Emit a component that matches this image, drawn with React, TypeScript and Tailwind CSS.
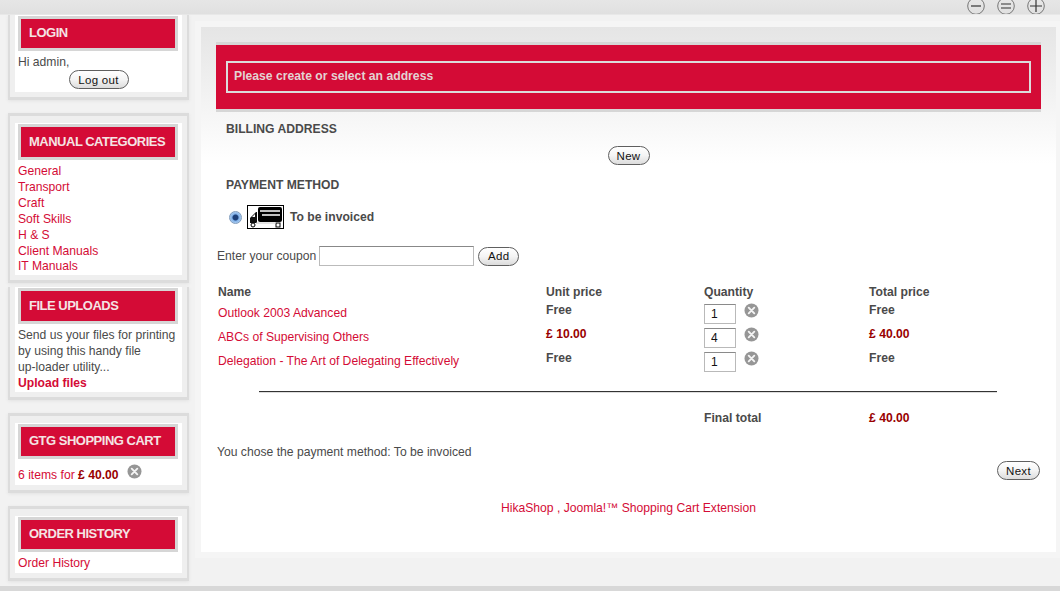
const font = { fontFamily: '"Liberation Sans", Arial, sans-serif' };

const categories = ["General", "Transport", "Craft", "Soft Skills", "H & S", "Client Manuals", "IT Manuals"];

const rows = [
  { name: "Outlook 2003 Advanced", unit: "Free", qty: "1", total: "Free" },
  { name: "ABCs of Supervising Others", unit: "£ 10.00", qty: "4", total: "£ 40.00" },
  { name: "Delegation - The Art of Delegating Effectively", unit: "Free", qty: "1", total: "Free" },
];

function RemoveIcon() {
  return (
    <svg width="15" height="15" viewBox="0 0 15 15" className="block shrink-0">
      <circle cx="7.5" cy="7.5" r="7" fill="#969696" />
      <path d="M4.7 4.7l5.6 5.6M10.3 4.7l-5.6 5.6" stroke="#f4f4f4" strokeWidth="1.9" strokeLinecap="round" />
    </svg>
  );
}

function PillButton({ label, width }: { label: string; width: string }) {
  return (
    <button
      className={`h-[19px] ${width} rounded-full border border-[#5f5f5f] bg-gradient-to-b from-white via-[#f4f4f4] to-[#dcdcdc] text-center text-[11.5px] leading-[16px] tracking-[0.3px] text-[#111]`}
    >
      {label}
    </button>
  );
}

function SideBox({
  title,
  children,
  className,
  tall,
}: {
  title: string;
  children: React.ReactNode;
  className: string;
  tall?: boolean;
}) {
  return (
    <div className={`w-[181px] border-x-[2px] border-b-[3px] border-[#dcdcdc] bg-[#efefef] px-[5px] pb-[5px] shadow-[0_1px_3px_#e2e2e2] ${className}`}>
      <div className="bg-white px-[3px] pt-[1px]">
        <div className={`flex w-[160px] items-center border-[3px] border-[#d6d6d6] bg-[#d40b36] pb-[2px] pl-[8px] ${tall ? "h-[36px]" : "h-[35px]"}`}>
          <h3 className="text-[13px] leading-[17px] font-bold tracking-[-0.5px] whitespace-nowrap text-[#f4e4e4] uppercase">{title}</h3>
        </div>
        {children}
      </div>
    </div>
  );
}

function PaymentIcon() {
  return (
    <svg width="37" height="24" viewBox="0 0 37 24" className="block">
      <rect x="0.5" y="0.5" width="36" height="23" fill="#fff" stroke="#000" />
      <rect x="11" y="2" width="24" height="15" rx="2" fill="#000" />
      <path d="M13 6h20M15 10h18" stroke="#fff" strokeWidth="1.5" />
      <path d="M3 13l6-6h1v11H3z" fill="#111" />
      <path d="M5 12l3-3v3z" fill="#fff" />
      <circle cx="6" cy="20" r="2" fill="#fff" stroke="#000" />
      <rect x="29" y="18" width="4" height="4" fill="#fff" stroke="#000" />
      <path d="M9 18h20" stroke="#ccc" />
    </svg>
  );
}

function QtyInput({ value }: { value: string }) {
  return (
    <input
      readOnly
      value={value}
      className="h-[20px] w-[32px] border border-[#b9b9b9] border-t-[#8a8a8a] bg-white pl-[6px] text-[12px] text-[#111] outline-none"
      style={font}
    />
  );
}

export default function App() {
  return (
    <div className="relative h-[591px] w-[1060px] overflow-hidden bg-[#f2f2f2] text-[12.15px] leading-[16px] text-[#4a4a4a]" style={font}>
      {/* top strip with font size controls */}
      <div className="flex h-[15px] justify-end gap-[12px] overflow-hidden border-b border-[#e8e8e8] bg-gradient-to-b from-[#e6e6e6] to-[#e0e0e0] pr-[15px]">
        {["M-5 0h10", "M-5-2h10M-5 2h10", "M-6 0h12M0-6v12"].map((d) => (
          <svg key={d} width="18" height="18" viewBox="-9 -9 18 18" className="-mt-[3px] shrink-0">
            <circle r="8.3" fill="none" stroke="#777" strokeWidth="1" />
            <path d={d} stroke="#333" strokeWidth="1.2" fill="none" />
          </svg>
        ))}
      </div>

      <div className="flex items-start">
        <aside className="ml-[8px] w-[181px] shrink-0">
          <SideBox title="Login" className="">
            <p className="mt-[3px]">Hi admin,</p>
            <div className="flex justify-center pb-[3px]">
              <PillButton label="Log out" width="w-[60px]" />
            </div>
          </SideBox>

          <SideBox title="Manual Categories" tall className="mt-[13px] border-t-[3px] pt-[7px]">
            <ul className="pt-[4px] text-[#d40b36]">
              {categories.map((c) => (
                <li key={c} className="leading-[15.9px]">{c}</li>
              ))}
            </ul>
          </SideBox>

          <SideBox title="File Uploads" tall className="mt-[4px]">
            <div className="pt-[3px] pb-[1px]">
              <p>Send us your files for printing</p>
              <p>by using this handy file</p>
              <p>up-loader utility...</p>
              <p className="font-bold text-[#d40b36]">Upload files</p>
            </div>
          </SideBox>

          <SideBox title="GTG Shopping Cart" className="mt-[13px] border-t-[3px] pt-[7px]">
            <div className="flex items-start gap-[8px] pt-[8px] pb-[2px]">
              <span className="text-[#d40b36]">
                6 items for <b className="text-[#990000]">£ 40.00</b>
              </span>
              <span className="-mt-[3px]">
                <RemoveIcon />
              </span>
            </div>
          </SideBox>

          <SideBox title="Order History" className="mt-[13px] border-t-[3px] pt-[7px]">
            <p className="pt-[3px] pb-[2px] text-[#d40b36]">Order History</p>
          </SideBox>
        </aside>

        <main className="mt-[6px] ml-[6px] w-[865px] bg-[#f5f5f5] p-[6px] pr-[4px] pb-[6px]">
          <div className="h-[525px] w-[855px] bg-gradient-to-b from-[#e5e5e5] via-white via-[26%] to-white pt-[15px]">
            <div className="mx-[15px] border-y-[3px] border-[#d6d6d6] bg-[#d40b36] px-[10px] py-[16px]">
              <div className="border-[2px] border-[#dcdcdc] pt-[6px] pb-[8px] pl-[6px] text-[12.2px] leading-[14px] font-bold text-[#e3d3d3]">
                Please create or select an address
              </div>
            </div>

            <h2 className="mt-[9px] ml-[25px] leading-[16px] font-bold uppercase">Billing address</h2>
            <div className="mt-[9px] flex justify-center">
              <PillButton label="New" width="w-[42px]" />
            </div>
            <h2 className="mt-[12px] ml-[25px] leading-[16px] font-bold uppercase">Payment method</h2>

            <div className="mt-[12px] ml-[28px] flex items-center">
              <span className="h-[13px] w-[13px] rounded-full border border-[#7f9cbd] bg-[radial-gradient(circle,#1c3f78_0_2.5px,#7fb0e8_3.5px,#d5e6f8_100%)]" />
              <span className="ml-[5px]">
                <PaymentIcon />
              </span>
              <span className="ml-[6px] font-bold">To be invoiced</span>
            </div>

            <div className="mt-[17px] ml-[16px] flex items-center">
              <span>Enter your coupon</span>
              <input className="ml-[3px] h-[20px] w-[155px] border border-[#bbb] border-t-[#888] bg-white outline-none" readOnly />
              <span className="ml-[4px]">
                <PillButton label="Add" width="w-[41px]" />
              </span>
            </div>

            <div className="mt-[18px] grid grid-cols-[328px_158px_165px_1fr] pl-[17px]">
              <div className="h-[18px] font-bold">Name</div>
              <div className="h-[18px] font-bold">Unit price</div>
              <div className="h-[18px] font-bold">Quantity</div>
              <div className="h-[18px] font-bold">Total price</div>
              {rows.map((r) => (
                <div key={r.name} className="col-span-4 grid h-[24px] grid-cols-subgrid items-start">
                  <div className="pt-[3px] text-[#d40b36]">{r.name}</div>
                  <div className={`font-bold ${r.unit === "Free" ? "" : "text-[#990000]"}`}>{r.unit}</div>
                  <div className="flex items-start gap-[8px] pt-[2px]">
                    <QtyInput value={r.qty} />
                    <span className="-mt-[1px]">
                      <RemoveIcon />
                    </span>
                  </div>
                  <div className={`font-bold ${r.total === "Free" ? "" : "text-[#990000]"}`}>{r.total}</div>
                </div>
              ))}
            </div>

            <div className="mt-[17px] ml-[58px] h-[2px] w-[738px] border-t border-[#333] border-b border-b-[#ddd]" />

            <div className="mt-[17px] flex pl-[503px] font-bold">
              <span className="w-[165px]">Final total</span>
              <span className="text-[#990000]">£ 40.00</span>
            </div>

            <p className="mt-[18px] ml-[16px]">You chose the payment method: To be invoiced</p>
            <div className="mt-[1px] flex justify-end pr-[16px]">
              <PillButton label="Next" width="w-[43px]" />
            </div>
            <p className="mt-[20px] text-center text-[#d40b36]">HikaShop , Joomla!™ Shopping Cart Extension</p>
          </div>
        </main>
      </div>

      <div className="absolute right-0 bottom-0 left-0 h-[5px] bg-[#d8d8d8]" />
    </div>
  );
}
